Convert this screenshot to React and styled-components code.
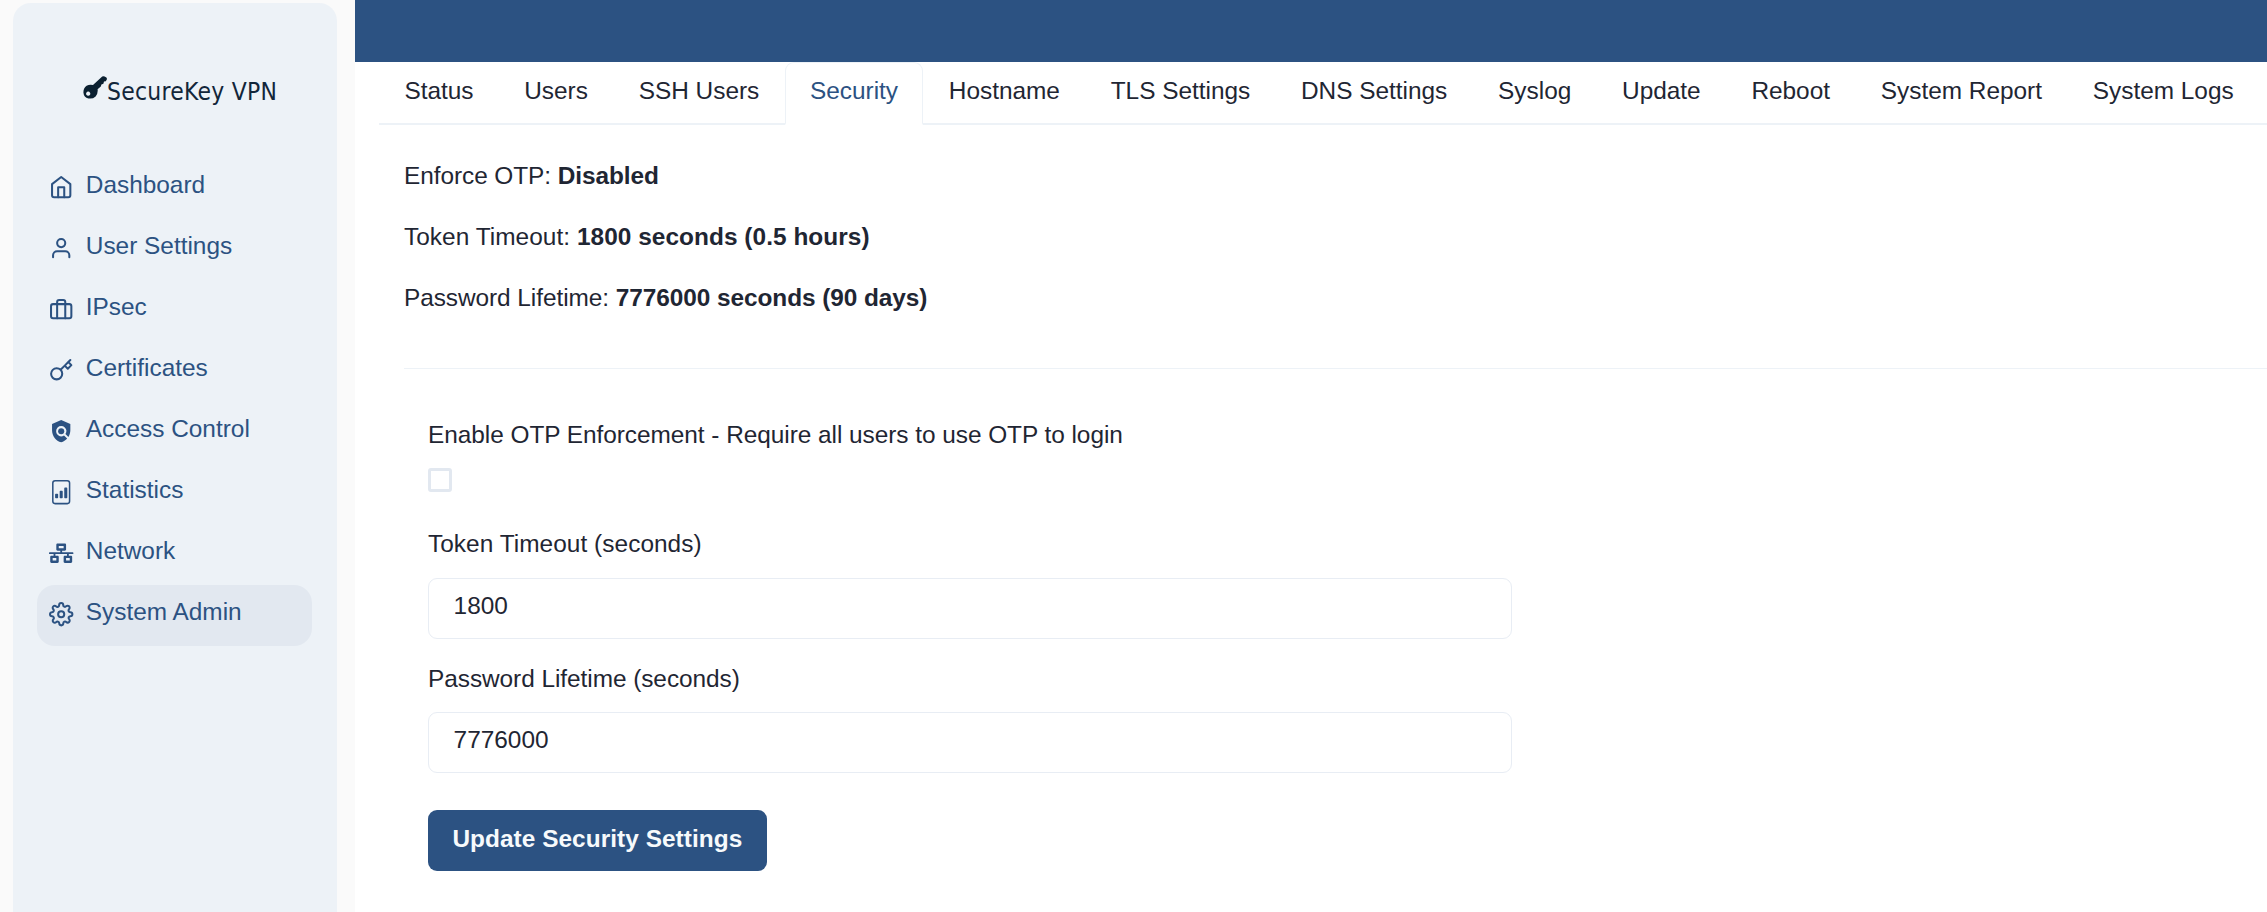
import React from "react";
import styled, { createGlobalStyle } from "styled-components";
import { FiHome, FiUser, FiBriefcase, FiKey, FiSettings } from "react-icons/fi";
import { MdPolicy } from "react-icons/md";
import { BsFileBarGraph } from "react-icons/bs";
import { FaNetworkWired } from "react-icons/fa";

const GlobalStyle = createGlobalStyle`
  *, *::before, *::after { box-sizing: border-box; }
  body {
    margin: 0;
    background: #fafafa;
    color: #1f2633;
    font-family: "Liberation Sans", Arial, sans-serif;
    font-size: 24.4px;
    line-height: 36.6px;
  }
  p { margin: 0; }
`;

const Page = styled.div`
  display: flex;
  height: 912px;
  overflow: hidden;
`;

const Sidebar = styled.aside`
  flex: none;
  width: 324px;
  height: 930px;
  margin: 3px 18px 0 13px;
  padding: 65px 25px 0 24px;
  background: #edf2f7;
  border-radius: 18px;
`;

const Brand = styled.div`
  display: flex;
  height: 90px;
  padding-left: 46px;
  color: #12263a;
`;

const BrandName = styled.span`
  margin-top: 6px;
  font-family: "DejaVu Sans Condensed", "DejaVu Sans", sans-serif;
  font-stretch: condensed;
  font-size: 24.4px;
  letter-spacing: 0.27px;
  line-height: 36px;
  white-space: nowrap;
`;

const KeyLogo = styled.svg`
  flex: none;
  width: 24px;
  height: 24px;
  margin-top: 8px;
`;

const NavItem = styled.a`
  display: flex;
  align-items: flex-start;
  height: 61px;
  padding: 8.6px 12.4px 0;
  gap: 12px;
  border-radius: 18px;
  color: #2c5282;
  background: ${(p) => (p.$active ? "#e2e8f0" : "transparent")};
  svg { flex: none; width: 24.4px; height: 24.4px; margin-top: 8.6px; }
`;

const Main = styled.main`
  flex: 1;
  min-width: 0;
  background: #fff;
`;

const TopBar = styled.header`
  height: 61.5px;
  background: #2c5282;
`;

const Tabs = styled.nav`
  display: flex;
  height: 63px;
  margin-left: 24px;
  border-bottom: 2px solid #edf2f7;
`;

const Tab = styled.a`
  height: 63px;
  padding: 10px 24.4px 0;
  border: 1.5px solid ${(p) => (p.$active ? "#edf2f7" : "transparent")};
  border-bottom: 2px solid ${(p) => (p.$active ? "#fff" : "transparent")};
  border-radius: 9px 9px 0 0;
  color: ${(p) => (p.$active ? "#2c5282" : "inherit")};
  letter-spacing: -0.01px;
  white-space: nowrap;
`;

const Panel = styled.section`
  padding: 33px 0 0 49px;
`;

const Fact = styled.p`
  height: 61.1px;
  letter-spacing: ${(p) => p.$tracking}px;
`;

const Divider = styled.hr`
  height: 1.5px;
  margin: 27px 0 0;
  border: 0;
  background: #edf2f7;
`;

const Form = styled.form`
  display: flex;
  flex-direction: column;
  align-items: flex-start;
  width: 1108px;
  padding: 48px 0 0 24px;
`;

const Label = styled.label`
  margin-top: ${(p) => p.$gap || 0}px;
  letter-spacing: ${(p) => p.$tracking}px;
`;

const Checkbox = styled.span`
  width: 24.4px;
  height: 24.4px;
  margin-top: 14px;
  border: 3px solid #e2e8f0;
  border-radius: 3px;
`;

const Input = styled.input`
  width: 100%;
  height: 61px;
  margin-top: 15px;
  padding: 0 24.6px 5px;
  border: 1.5px solid #e8edf4;
  border-radius: 9px;
  background: #fff;
  color: inherit;
  font: inherit;
`;

const SubmitButton = styled.button`
  height: 61px;
  margin-top: 37px;
  padding: 0 24.4px 4px;
  border: 0;
  border-radius: 9px;
  background: #2c5282;
  color: #f7fafc;
  font: inherit;
  font-weight: 700;
  letter-spacing: 0.05px;
`;

const NAV = [
  ["Dashboard", FiHome],
  ["User Settings", FiUser],
  ["IPsec", FiBriefcase],
  ["Certificates", FiKey],
  ["Access Control", MdPolicy],
  ["Statistics", BsFileBarGraph],
  ["Network", FaNetworkWired],
  ["System Admin", FiSettings],
];

const TABS = [
  "Status", "Users", "SSH Users", "Security", "Hostname", "TLS Settings",
  "DNS Settings", "Syslog", "Update", "Reboot", "System Report", "System Logs",
];

export default function App() {
  return (
    <Page>
      <GlobalStyle />
      <Sidebar>
        <Brand>
          <KeyLogo viewBox="0 0 24 24" fill="#0b2030">
            <path fillRule="evenodd" d="M19.2 0.6 Q20.4 -0.2 21.6 0.6 L23.4 1.4 Q24.2 2.4 23.8 3.6 L22.8 5.2 L21 5.6 L20.4 7.8 L18.4 8.4 L17.8 10.4 L14.6 13.2 Q15.2 17.4 12.6 20.4 Q9.6 23.2 5.4 22.4 Q0.8 21.2 0.4 16.4 Q0.4 11.8 3.6 9.8 Q6.6 8 10 9 Z M5.2 15.6 a2.1 2.1 0 1 0 .01 0 Z" />
          </KeyLogo>
          <BrandName>SecureKey VPN</BrandName>
        </Brand>
        {NAV.map(([name, Icon]) => (
          <NavItem key={name} $active={name === "System Admin"}>
            <Icon />
            <span>{name}</span>
          </NavItem>
        ))}
      </Sidebar>
      <Main>
        <TopBar />
        <Tabs>
          {TABS.map((name) => (
            <Tab key={name} $active={name === "Security"}>{name}</Tab>
          ))}
        </Tabs>
        <Panel>
          <Fact $tracking={-0.06}>Enforce OTP: <b>Disabled</b></Fact>
          <Fact $tracking={0.05}>Token Timeout: <b>1800 seconds (0.5 hours)</b></Fact>
          <Fact $tracking={-0.06}>Password Lifetime: <b>7776000 seconds (90 days)</b></Fact>
          <Divider />
          <Form>
            <Label $tracking={-0.04}>Enable OTP Enforcement - Require all users to use OTP to login</Label>
            <Checkbox />
            <Label $gap={34} $tracking={0.05}>Token Timeout (seconds)</Label>
            <Input defaultValue="1800" />
            <Label $gap={22} $tracking={-0.05}>Password Lifetime (seconds)</Label>
            <Input defaultValue="7776000" />
            <SubmitButton type="button">Update Security Settings</SubmitButton>
          </Form>
        </Panel>
      </Main>
    </Page>
  );
}
